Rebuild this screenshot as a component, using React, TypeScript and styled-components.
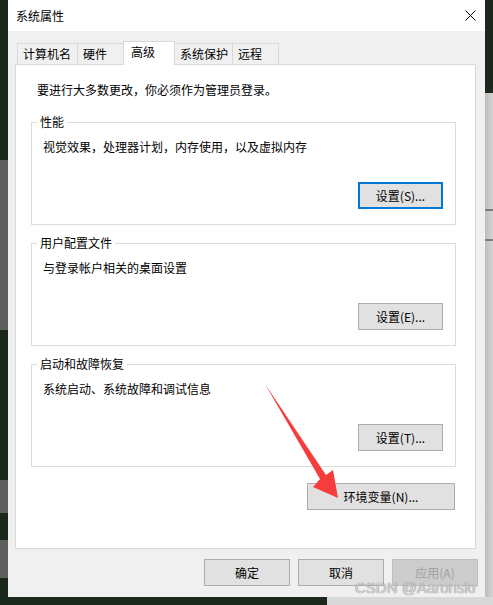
import styled, { createGlobalStyle, css } from 'styled-components';

// ─── Tokens ───────────────────────────────────────────────────────────────────

const colors = {
  desktop: '#1b281d',
  desktopGrey: '#5e605e',
  window: '#f0f0f0',
  white: '#ffffff',
  text: '#000000',
  tabBorder: '#d9d9d9',
  groupBorder: '#dcdcdc',
  buttonBg: '#e1e1e1',
  buttonBorder: '#adadad',
  focus: '#0078d7',
  disabledBg: '#cccccc',
  disabledBorder: '#bfbfbf',
  disabledText: '#a0a0a0',
  arrow: '#f53d3d',
};

const Global = createGlobalStyle`
  html, body {
    margin: 0;
    padding: 0;
  }
  body {
    width: 493px;
    height: 605px;
    overflow: hidden;
    background: ${colors.desktop};
    font-family: "Noto Sans CJK SC", "Noto Sans", sans-serif;
    font-size: 12px;
    line-height: 16px;
    color: ${colors.text};
  }
`;

// ─── Desktop around the dialog ────────────────────────────────────────────────

const Desktop = styled.div`
  position: relative;
  width: 493px;
  height: 605px;
  display: flex;
  flex-direction: column;
`;

const DesktopRow = styled.div`
  display: flex;
  height: 597px;
`;

const LeftStrip = styled.div`
  width: 8px;
  background: linear-gradient(
    to bottom,
    ${colors.desktop} 0 160px,
    ${colors.desktopGrey} 160px 330px,
    ${colors.desktop} 330px 480px,
    ${colors.desktopGrey} 480px 513px,
    ${colors.desktop} 513px 540px,
    ${colors.desktopGrey} 540px 578px,
    ${colors.desktop} 578px
  );
`;

/* Neighbouring window's scrollbar peeking out on the right */
const RightStrip = styled.div`
  width: 8px;
  background:
    linear-gradient(
      to bottom,
      transparent 0 209px,
      #7c7c7c 209px 211px,
      transparent 211px 239px,
      #7c7c7c 239px 241px,
      transparent 241px
    ),
    linear-gradient(to right, #bdbdbd, #d4d4d4),
    ${colors.desktop};
  background-size: 100% 100%, 100% calc(100% - 93px), 100% 100%;
  background-position: 0 0, 0 93px, 0 0;
  background-repeat: no-repeat;
`;

const BottomStrip = styled.div`
  flex: 1;
  background: linear-gradient(
    to right,
    ${colors.desktop} 0 327px,
    #d8d8d8 327px
  );
`;

// ─── Dialog chrome ────────────────────────────────────────────────────────────

const Dialog = styled.div`
  width: 477px;
  display: flex;
  flex-direction: column;
  background: ${colors.window};
`;

const TitleBar = styled.div`
  height: 31px;
  flex: none;
  background: ${colors.white};
  display: flex;
  align-items: center;
  justify-content: space-between;
  padding-left: 8px;
`;

const Title = styled.span`
  line-height: 16px;
  margin-top: 1px;
`;

const CloseButton = styled.div`
  width: 30px;
  height: 31px;
  display: flex;
  align-items: center;
  justify-content: center;
  margin-top: -1px;
`;

const DialogBody = styled.div`
  flex: 1;
  display: flex;
  flex-direction: column;
  padding: 10px 9px 0 7px;
`;

// ─── Tabs ─────────────────────────────────────────────────────────────────────

const TabStrip = styled.div`
  display: flex;
  align-items: flex-end;
  height: 23px;
  margin-left: 2px;
  position: relative;
  z-index: 1;
`;

const Tab = styled.div<{ $w: number; $active?: boolean }>`
  box-sizing: border-box;
  width: ${({ $w }) => $w}px;
  height: 21px;
  padding-left: 5px;
  border: 1px solid ${colors.tabBorder};
  border-bottom: none;
  background: ${colors.window};
  display: flex;
  align-items: center;
  white-space: nowrap;
  & + & {
    margin-left: -1px;
  }

  ${({ $active }) =>
    $active &&
    css`
      position: relative;
      z-index: 1;
      height: 24px;
      margin-bottom: -1px;
      padding-left: 7px;
      padding-bottom: 3px;
      background: ${colors.white};
    `}
`;

const TabPanel = styled.div`
  box-sizing: border-box;
  height: 485px;
  background: ${colors.white};
  border: 1px solid ${colors.tabBorder};
  display: flex;
  flex-direction: column;
  padding: 0 19px 0 15px;
`;

const Intro = styled.p`
  margin: 17px 0 16px;
  padding-left: 6px;
`;

// ─── Group box ────────────────────────────────────────────────────────────────

const GroupBox = styled.fieldset`
  margin: 0;
  min-width: 0;
  padding: 9px 12px 15px 5px;
  border: 1px solid ${colors.groupBorder};
  & + & {
    margin-top: 10px;
  }
`;

const Legend = styled.legend`
  padding: 0 3px;
  line-height: 16px;
`;

const GroupBody = styled.div`
  display: flex;
  flex-direction: column;
`;

const GroupText = styled.div`
  padding-left: 6px;
  height: 16px;
`;

// ─── Buttons ──────────────────────────────────────────────────────────────────

type ButtonTone = 'normal' | 'focused' | 'disabled';

const toneStyles: Record<ButtonTone, ReturnType<typeof css>> = {
  normal: css`
    border: 1px solid ${colors.buttonBorder};
    background: ${colors.buttonBg};
    color: ${colors.text};
  `,
  focused: css`
    border: 2px solid ${colors.focus};
    background: ${colors.buttonBg};
    color: ${colors.text};
  `,
  disabled: css`
    border: 1px solid ${colors.disabledBorder};
    background: ${colors.disabledBg};
    color: ${colors.disabledText};
  `,
};

const Button = styled.div<{ $w: number; $tone?: ButtonTone }>`
  box-sizing: border-box;
  width: ${({ $w }) => $w}px;
  height: 27px;
  display: flex;
  align-items: center;
  justify-content: center;
  white-space: nowrap;
  ${({ $tone = 'normal' }) => toneStyles[$tone]}
`;

const GroupButton = styled(Button)`
  align-self: flex-end;
  margin-top: 27px;
`;

const EnvButton = styled(Button)`
  align-self: flex-end;
  margin: 16px 1px 0 0;
`;

const Footer = styled.div`
  display: flex;
  justify-content: flex-end;
  gap: 8px;
  padding: 10px 0 11px;
  margin-right: -2px;
`;

// ─── Overlays ─────────────────────────────────────────────────────────────────

const ArrowLayer = styled.svg`
  position: absolute;
  left: 0;
  top: 0;
  pointer-events: none;
`;

/* Blog watermark burnt into the screenshot: pale grey with a soft dark rim */
const Watermark = styled.div`
  position: absolute;
  left: 355px;
  top: 579px;
  font-family: "Liberation Sans", Arial, sans-serif;
  font-size: 15px;
  line-height: 18px;
  color: #d2d2d2;
  text-shadow: 0 0 1px rgba(80, 80, 80, 0.85);
  white-space: nowrap;
`;

// ─── Data ─────────────────────────────────────────────────────────────────────

const tabs = [
  { label: '计算机名', w: 61 },
  { label: '硬件', w: 47 },
  { label: '高级', w: 52, active: true },
  { label: '系统保护', w: 59 },
  { label: '远程', w: 47 },
];

const groups: { title: string; text: string; button: string; tone: ButtonTone }[] = [
  { title: '性能', text: '视觉效果，处理器计划，内存使用，以及虚拟内存', button: '设置(S)...', tone: 'focused' },
  { title: '用户配置文件', text: '与登录帐户相关的桌面设置', button: '设置(E)...', tone: 'normal' },
  { title: '启动和故障恢复', text: '系统启动、系统故障和调试信息', button: '设置(T)...', tone: 'normal' },
];

// ─── App ──────────────────────────────────────────────────────────────────────

export default function App() {
  return (
    <>
      <Global />
      <Desktop>
        <DesktopRow>
          <LeftStrip />
          <Dialog>
            <TitleBar>
              <Title>系统属性</Title>
              <CloseButton>
                <svg width="11" height="11" viewBox="0 0 11 11">
                  <path d="M0.5 0.5 L10.5 10.5 M10.5 0.5 L0.5 10.5" stroke="#000" strokeWidth="1" />
                </svg>
              </CloseButton>
            </TitleBar>

            <DialogBody>
              <TabStrip>
                {tabs.map((t) => (
                  <Tab key={t.label} $w={t.w} $active={t.active}>
                    {t.label}
                  </Tab>
                ))}
              </TabStrip>

              <TabPanel>
                <Intro>要进行大多数更改，你必须作为管理员登录。</Intro>

                {groups.map((g) => (
                  <GroupBox key={g.title}>
                    <Legend>{g.title}</Legend>
                    <GroupBody>
                      <GroupText>{g.text}</GroupText>
                      <GroupButton $w={85} $tone={g.tone}>
                        {g.button}
                      </GroupButton>
                    </GroupBody>
                  </GroupBox>
                ))}

                <EnvButton $w={148}>环境变量(N)...</EnvButton>
              </TabPanel>

              <Footer>
                <Button $w={86}>确定</Button>
                <Button $w={86}>取消</Button>
                <Button $w={86} $tone="disabled">应用(A)</Button>
              </Footer>
            </DialogBody>
          </Dialog>
          <RightStrip />
        </DesktopRow>
        <BottomStrip />

        <ArrowLayer width="493" height="605" viewBox="0 0 493 605">
          <polygon
            points="265,384 326,475 333,470 338,498 313,487 320,479"
            fill={colors.arrow}
          />
        </ArrowLayer>
        <Watermark>CSDN @Aaronskr</Watermark>
      </Desktop>
    </>
  );
}
